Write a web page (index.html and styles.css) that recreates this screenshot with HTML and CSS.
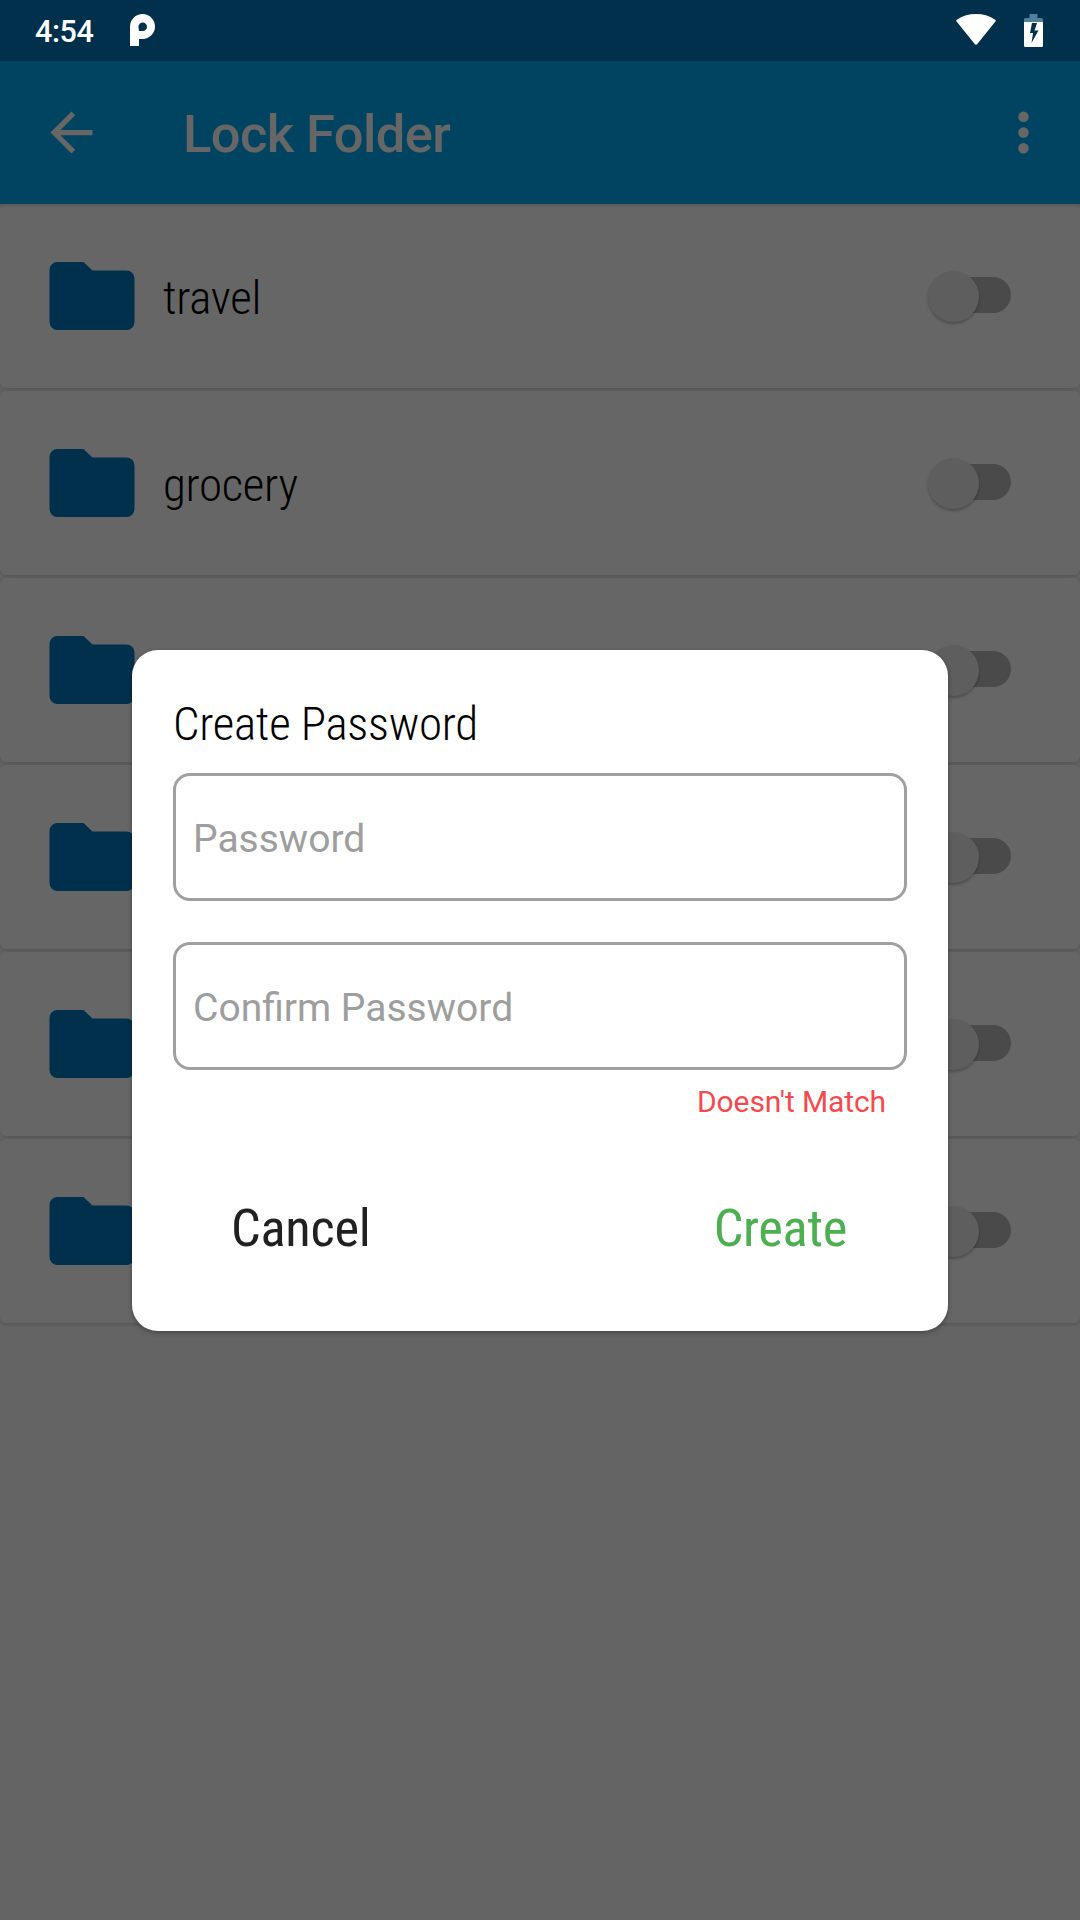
FILE: index.html
```html
<!DOCTYPE html>
<html lang="en">
<head>
    <meta charset="UTF-8">
    <meta name="viewport" content="width=device-width, initial-scale=1.0">
    <title>Lock Folder</title>
    <link rel="stylesheet" href="styles.css">
</head>
<body>
    <svg class="symbols">
        <symbol id="folder" viewBox="0 0 85 68">
            <path d="M8 0H34L43 8.500H77a8 8 0 0 1 8 8V60a8 8 0 0 1-8 8H8a8 8 0 0 1-8-8V8a8 8 0 0 1 8-8z"/>
        </symbol>
    </svg>

    <div class="status-bar">
        <span class="time">4:54</span>
        <svg class="p-icon" viewBox="0 0 25 32">
            <path fill-rule="evenodd" d="M0 32V12.500a12.500 12.500 0 1 1 12.500 12.500H9V32zM9 17h3.700a4.300 4.300 0 1 0-4.300-4.300z"/>
        </svg>
        <svg class="wifi" viewBox="0 0 40 31">
            <path d="M1 8Q-.5 6.500 1.200 5.400Q9.500 0 20 0T38.800 5.400Q40.500 6.500 39 8L21.500 29.800Q20 31.500 18.500 29.800z"/>
        </svg>
        <svg class="battery" viewBox="0 0 19 33">
            <path class="battery-top" d="M5.500 0h8v4H17.500q1.500 0 1.500 1.500V8H0V5.500Q0 4 1.500 4h4z"/>
            <path fill-rule="evenodd" d="M0 8h19v23.500q0 1.500-1.500 1.500h-16Q0 33 0 31.500zM8 9L6 19H9L7.500 29L14.500 16.500H10.500L13 9z"/>
        </svg>
    </div>

    <div class="app-bar">
        <svg class="back" viewBox="0 0 24 24">
            <path d="M20 11H7.830l5.590-5.590L12 4l-8 8 8 8 1.410-1.410L7.830 13H20v-2z"/>
        </svg>
        <h1>Lock Folder</h1>
        <svg class="more" viewBox="0 0 24 24">
            <circle cx="12" cy="6" r="2"/>
            <circle cx="12" cy="12" r="2"/>
            <circle cx="12" cy="18" r="2"/>
        </svg>
    </div>

    <div class="folders">
        <div class="folder">
            <svg class="folder-icon"><use href="#folder"/></svg>
            <span class="folder-name">travel</span>
            <div class="switch"><div class="thumb"></div></div>
        </div>
        <div class="folder">
            <svg class="folder-icon"><use href="#folder"/></svg>
            <span class="folder-name">grocery</span>
            <div class="switch"><div class="thumb"></div></div>
        </div>
        <div class="folder">
            <svg class="folder-icon"><use href="#folder"/></svg>
            <div class="switch"><div class="thumb"></div></div>
        </div>
        <div class="folder">
            <svg class="folder-icon"><use href="#folder"/></svg>
            <div class="switch"><div class="thumb"></div></div>
        </div>
        <div class="folder">
            <svg class="folder-icon"><use href="#folder"/></svg>
            <div class="switch"><div class="thumb"></div></div>
        </div>
        <div class="folder">
            <svg class="folder-icon"><use href="#folder"/></svg>
            <div class="switch"><div class="thumb"></div></div>
        </div>
    </div>

    <div class="overlay">
        <div class="dialog">
            <h2>Create Password</h2>
            <input class="field" type="text" placeholder="Password">
            <input class="field" type="text" placeholder="Confirm Password">
            <p class="error">Doesn't Match</p>
            <div class="actions">
                <button class="cancel">Cancel</button>
                <button class="create">Create</button>
            </div>
        </div>
    </div>
</body>
</html>
```

FILE: styles.css
```css
* {
    box-sizing: border-box;
}

body {
    margin: 0;
    height: 1920px;
    overflow: hidden;
    font-family: Roboto, sans-serif;
    background: #fafafa;
}

.symbols {
    display: none;
}

.status-bar {
    position: relative;
    z-index: 3; /* stays above the overlay */
    display: flex;
    align-items: flex-start;
    height: 61px;
    padding: 14px 37px 0 35px;
    background: #00304c;
    color: #fff;
}

.status-bar svg {
    fill: #fff;
}

.time {
    width: 95px;
    font-size: 30.5px;
    font-weight: 500;
    line-height: 35px;
    letter-spacing: -0.4px;
}

.p-icon {
    width: 25px;
    height: 32px;
}

.wifi {
    width: 40px;
    height: 31px;
    margin-left: auto;
}

.battery {
    width: 19px;
    height: 33px;
    margin-left: 28px;
}

.status-bar .battery-top {
    fill: #527f99;
}

.app-bar {
    position: relative;
    z-index: 1;
    display: flex;
    align-items: center;
    height: 143px;
    padding: 0 25px 0 40px;
    background: #00aaf3;
    color: #fff;
    box-shadow: 0 1px 4px rgba(0, 0, 0, 0.2);
}

.app-bar svg {
    width: 63px;
    height: 63px;
    fill: currentColor;
}

.app-bar h1 {
    margin: 2px 0 0 80px;
    font-size: 52.5px;
    font-weight: 500;
    line-height: 62px;
    letter-spacing: -0.6px;
}

.app-bar .more {
    margin-left: auto;
}

.folders {
    display: flex;
    flex-direction: column;
    gap: 3px;
}

.folder {
    display: flex;
    align-items: center;
    height: 184px;
    padding: 0 69px 0 49px;
    background: #fff;
    border-radius: 6px;
    box-shadow: 0 1px 4px rgba(0, 0, 0, 0.18);
}

.folder-icon {
    width: 86px;
    height: 68px;
    fill: #0078be;
}

.folder-name,
.dialog h2,
.actions button {
    font-family: "Roboto Condensed", Roboto, sans-serif;
    font-stretch: 75%;
    letter-spacing: -0.3px;
}

.folder-name {
    margin: 4px 0 0 28px;
    font-size: 47px;
    font-weight: 300;
    line-height: 56px;
    color: #000;
}

.switch {
    display: flex;
    align-items: center;
    width: 84px;
    height: 36px;
    margin-left: auto;
    margin-bottom: 2px;
    border-radius: 18px;
    background: linear-gradient(to right, transparent 30px, #b9b9b9 30px);
}

.thumb {
    width: 51px;
    height: 51px;
    margin: 2px 0 0 1px;
    flex-shrink: 0;
    border-radius: 50%;
    background: #ececec;
    box-shadow: 0 2px 3px rgba(0, 0, 0, 0.25);
}

.overlay {
    position: absolute;
    inset: 0;
    z-index: 2;
    padding: 650px 132px 0;
    background: rgba(0, 0, 0, 0.6);
}

.dialog {
    height: 681px;
    padding: 46px 41px 0;
    background: #fff;
    border-radius: 26px;
    box-shadow: 0 2px 5px rgba(0, 0, 0, 0.3);
}

.dialog h2 {
    margin: 0 0 21px;
    font-size: 47px;
    font-weight: 300;
    line-height: 56px;
    color: #000;
}

.field {
    display: block;
    width: 734px;
    height: 128px;
    margin-bottom: 41px;
    padding: 4px 17px 0;
    border: 3px solid #a0a0a0;
    border-radius: 17px;
    background: #fff;
    font-family: Roboto, sans-serif;
    font-size: 39px;
}

.field::placeholder {
    color: #9e9e9e;
}

.error {
    margin: -27px 21px 0 0;
    font-size: 30px;
    line-height: 36px;
    letter-spacing: -0.1px;
    text-align: right;
    color: #f44a4e;
}

.actions {
    display: flex;
    justify-content: space-between;
    margin-top: 77px;
    padding: 0 60px 0 58px;
}

.actions button {
    padding: 0;
    border: none;
    background: none;
    font-size: 52.5px;
    font-weight: 400;
    line-height: 62px;
}

.cancel {
    color: #212121;
}

.create {
    color: #4caf50;
}
```
